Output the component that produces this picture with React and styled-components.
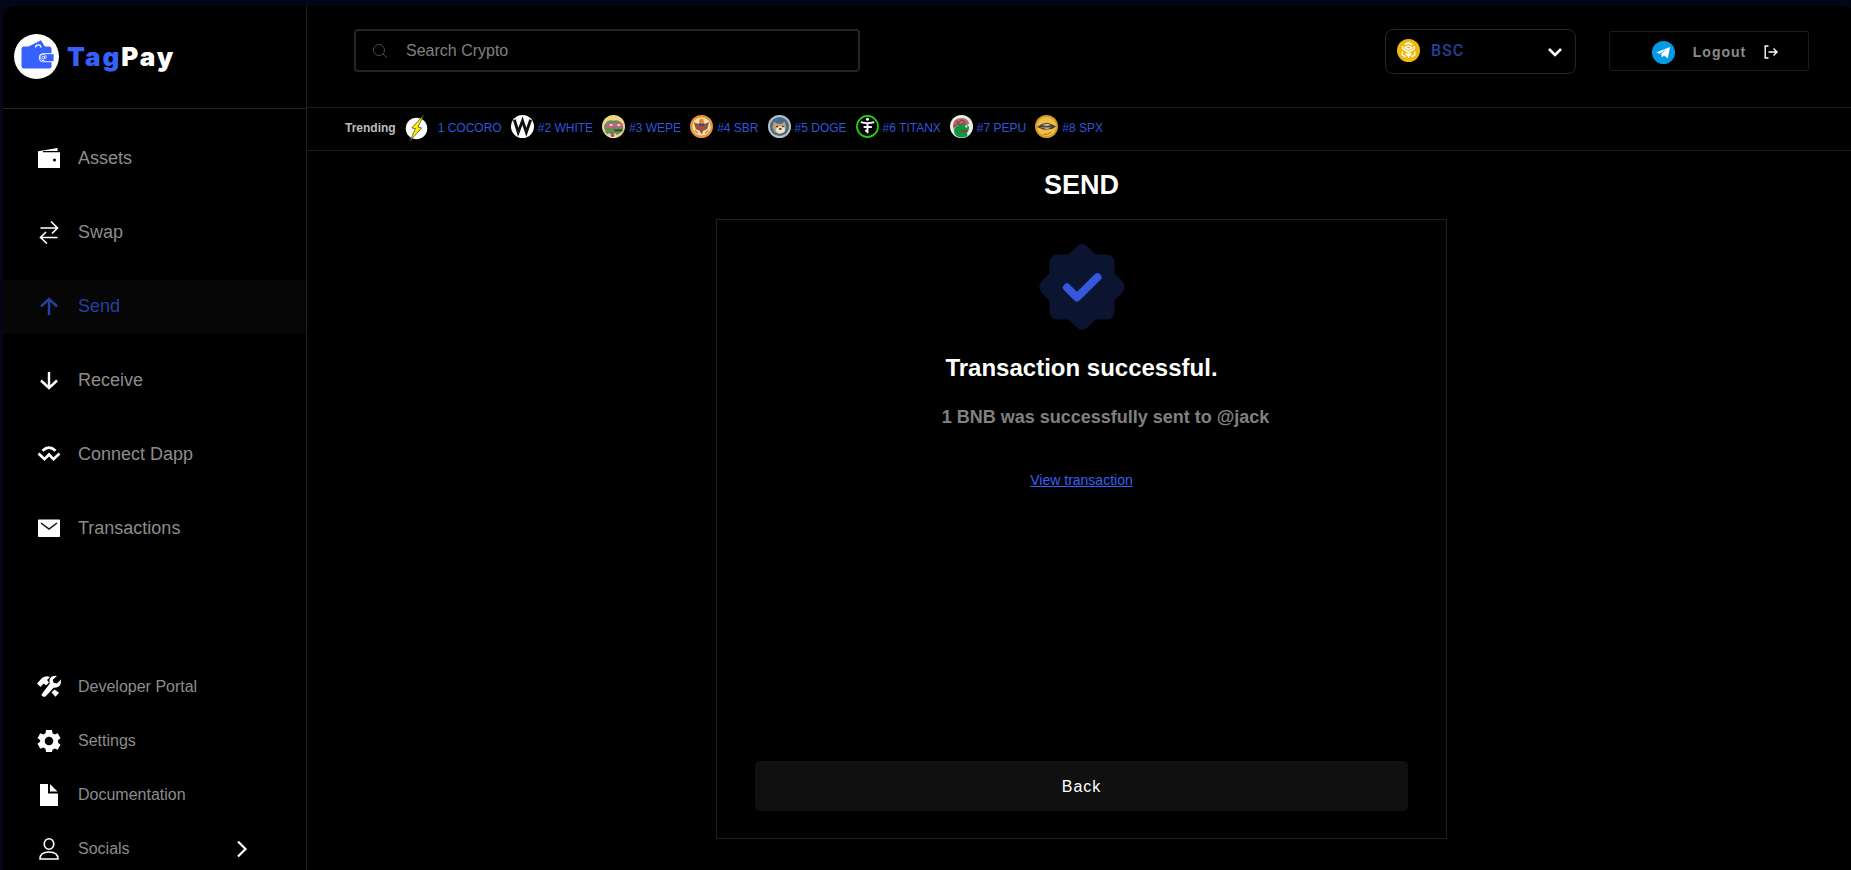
import styled, { createGlobalStyle } from "styled-components";

const GlobalStyle = createGlobalStyle`
  * { box-sizing: border-box; }
  body {
    margin: 0;
    min-height: 100vh;
    background: #030616;
    color: #fff;
    font-family: "Liberation Sans", Arial, sans-serif;
    overflow-x: hidden;
  }
  button, input, select { font: inherit; }
`;

const Frame = styled.div`
  display: grid;
  grid-template-columns: 304px 1fr;
  min-height: calc(100vh - 6px);
  margin: 6px -5px 0 3px;
  background: #000;
  border-radius: 12px;
`;

const Sidebar = styled.aside`
  display: flex;
  flex-direction: column;
  border-right: 1px solid #1f1f1f;
`;

const Brand = styled.a`
  display: flex;
  align-items: center;
  gap: 8px;
  height: 103px;
  padding: 0 0 2px 11px;
  border-bottom: 1px solid #242424;
  color: #fff;
  text-decoration: none;
`;

const BrandName = styled.span`
  font-family: Inter, sans-serif;
  font-size: 26px;
  font-weight: 900;
  letter-spacing: 2px;

  b {
    color: #3761ff;
    font-weight: 900;
  }
`;

const NavList = styled.nav`
  display: flex;
  flex-direction: column;
  gap: ${({ $gap }) => $gap}px;
  padding-top: ${({ $top }) => $top}px;
  font-size: ${({ $size }) => $size}px;
`;

const NavItem = styled.a`
  display: flex;
  align-items: center;
  gap: 17px;
  height: 54px;
  padding: 0 56px 2px 34px;
  background: ${({ $active }) => ($active ? "#060606" : "transparent")};
  color: ${({ $active }) => ($active ? "#2440a0" : "#8c8c8c")};
  text-decoration: none;

  svg {
    color: ${({ $active }) => ($active ? "#2440a0" : "#fff")};
  }

  span {
    flex: 1;
  }
`;

const Main = styled.main`
  display: flex;
  flex-direction: column;
  min-width: 0;
`;

const Header = styled.header`
  display: flex;
  align-items: flex-start;
  height: 102px;
  padding: 23px 47px 0;
  border-bottom: 1px solid #1c1c1c;
`;

const SearchBox = styled.label`
  display: flex;
  align-items: center;
  gap: 18px;
  width: 506px;
  height: 43px;
  margin-right: auto;
  padding: 0 16px;
  border: 2px solid #242424;
  border-radius: 4px;
  color: #4a4a4a;
`;

const SearchInput = styled.input`
  flex: 1;
  min-width: 0;
  padding: 0;
  border: 0;
  outline: 0;
  background: transparent;
  color: #fff;
  font-size: 16px;

  &::placeholder {
    color: #808080;
    opacity: 1;
  }
`;

const NetworkBox = styled.label`
  display: flex;
  align-items: center;
  gap: 11px;
  width: 191px;
  height: 45px;
  margin-right: 33px;
  padding: 0 12px 2px 11px;
  border: 1px solid #262626;
  border-radius: 8px;
`;

const NetworkSelect = styled.select`
  flex: 1;
  min-width: 0;
  padding: 0;
  border: 0;
  outline: 0;
  appearance: none;
  background: transparent;
  color: #273f98;
  font-family: Roboto, sans-serif;
  font-size: 16px;
  font-weight: 500;
  letter-spacing: 1px;
`;

const LogoutButton = styled.button`
  display: flex;
  align-items: center;
  justify-content: center;
  gap: 18px;
  width: 200px;
  height: 40px;
  margin-top: 2px;
  padding: 2px 0 0 12px;
  border: 1px solid #1c1c1c;
  border-radius: 3px;
  background: transparent;
  color: #8a8a8a;
  font-size: 14px;
  font-weight: 700;
  letter-spacing: 1px;
`;

const Trending = styled.section`
  display: flex;
  align-items: center;
  gap: 9px;
  height: 43px;
  padding: 0 38px 6px;
  border-bottom: 1px solid #1c1c1c;
  font-size: 12px;
`;

const TrendingTitle = styled.h2`
  margin: 3px 0 0;
  color: #bdbdbd;
  font-size: 12px;
`;

const Coin = styled.a`
  display: flex;
  align-items: center;
  gap: ${({ $gap }) => $gap || 4}px;
  color: #2f55dc;
  text-decoration: none;

  svg {
    overflow: visible;
  }

  span {
    margin-top: 3px;
  }
`;

const Page = styled.section`
  display: flex;
  flex-direction: column;
  align-items: center;
  padding: 18px 24px 24px;
`;

const PageTitle = styled.h1`
  margin: 0 0 17px;
  font-size: 27px;
  line-height: 33px;
`;

const Card = styled.div`
  display: flex;
  flex-direction: column;
  align-items: center;
  width: 100%;
  max-width: 731px;
  min-height: 620px;
  padding: 24px 38px 27px;
  border: 1px solid #1f1f1f;
`;

const CardTitle = styled.h2`
  margin: 23px 0 0;
  font-size: 24px;
  line-height: 30px;
`;

const Message = styled.p`
  margin: 20px 0 0;
  padding-left: 48px;
  color: #808080;
  font-size: 18px;
  font-weight: 700;
  line-height: 28px;
`;

const TxLink = styled.a`
  margin: 39px 0 24px;
  color: #3761f5;
  font-size: 14px;
  line-height: 20px;
`;

const BackButton = styled.button`
  width: 100%;
  height: 50px;
  margin-top: auto;
  padding: 2px 0 0;
  border: 0;
  border-radius: 5px;
  background: #101010;
  color: #fff;
  font-size: 16px;
  font-weight: 500;
  letter-spacing: 1px;
`;

function Icon({ size = 24, box = 24, children, ...rest }) {
  return (
    <svg width={size} height={size} viewBox={`0 0 ${box} ${box}`} fill="none" aria-hidden="true" {...rest}>
      {children}
    </svg>
  );
}

const stroke = { stroke: "currentColor", fill: "none" };

function BrandLogo() {
  return (
    <Icon size={45} box={45}>
      <circle cx="22.5" cy="22.5" r="22.5" fill="#fff" />
      <path d="M14 14.500 15.500 12 27 6.200 31 13z" fill="#3761ff" />
      <rect x="7.500" y="12.500" width="30" height="22" rx="2.500" fill="#3761ff" />
      <path d="M21.500 13.500a2.700 2.700 0 0 1 5.400 0" stroke="#fff" strokeWidth="1.300" />
      <path d="M40 19.700H28.500q-3.300 0-3.300 4t3.300 4H40z" fill="#3761ff" stroke="#fff" strokeWidth=".9" />
      <circle cx="29.200" cy="23.700" r="1.300" stroke="#fff" strokeWidth=".8" />
      <path d="M30.600 22.300v2q1.600.5 1.600-1.200a3 3 0 1 0-1.600 3.100" stroke="#fff" strokeWidth=".8" />
    </Icon>
  );
}

function WalletIcon() {
  return (
    <Icon>
      <path d="M1 5.200 20.500 2v3H6v1.200h17V22H1z" fill="currentColor" />
      <circle cx="17.500" cy="14" r="1.500" fill="#000" />
    </Icon>
  );
}

function SwapIcon() {
  return (
    <Icon {...stroke} strokeWidth="1.600">
      <path d="M3.500 8H20.500M14 1.500 20.500 8 15 13.500M20.500 17.500H3.500M10 23.500l-6.500-6L9 12" />
    </Icon>
  );
}

function UpIcon() {
  return (
    <Icon {...stroke} strokeWidth="2.400">
      <path d="M12 21V5M4 12.500 12 5l8 7.500" />
    </Icon>
  );
}

function DownIcon() {
  return (
    <Icon {...stroke} strokeWidth="2.400">
      <path d="M12 4v16M4 12.500l8 7.500 8-7.500" />
    </Icon>
  );
}

function DappIcon() {
  return (
    <Icon {...stroke} strokeWidth="2.700">
      <path d="M5.500 8.700q6.500-6 13 0" />
      <path d="m1.500 11.500 6 5.700L12 12.500l4.500 4.700 6-5.700" />
    </Icon>
  );
}

function MailIcon() {
  return (
    <Icon>
      <rect x="1" y="3.500" width="22" height="17.500" rx=".8" fill="currentColor" />
      <path d="m4 7 8 6 8-6" stroke="#111" strokeWidth="1.500" />
    </Icon>
  );
}

function ToolsIcon() {
  return (
    <Icon>
      <path d="M0 8.500 5 3q4-3 8-1l-3 3 2 2.500-3 3-2.200-2L3.500 12z" fill="currentColor" />
      <path d="m14.500 17.500 3-3 4.500 3.300-3.500 4z" fill="currentColor" />
      <path d="M4.500 19.500a2.700 2.700 0 0 0 4 2l8.200-8.800q5 .3 7-3.700l.3-4.500-4.200 4-3.200-.8-.8-3L20 1q-5-1-7.200 3-1 2 0 4.500z" fill="currentColor" />
    </Icon>
  );
}

function GearIcon() {
  return (
    <Icon>
      <path
        fill="currentColor"
        fillRule="evenodd"
        d="M9 1h6l.5 3.300 2.200 1.300 3-1.300 2.800 4.900-2.600 2 .1 2.600 2.500 1.900-2.800 5-3-1.300-2.200 1.300L15 23H9l-.5-3.300-2.200-1.200-3 1.200-2.800-5 2.600-1.900V11L.5 9.200l2.800-4.900 3 1.300 2.200-1.300zM12 7.700a4.300 4.300 0 1 0 0 8.600 4.300 4.300 0 0 0 0-8.600z"
      />
    </Icon>
  );
}

function FileIcon() {
  return (
    <Icon>
      <path d="M3 1h8v9.500h10V23H3z" fill="currentColor" />
      <path d="M13 1v7.500h7.500z" fill="currentColor" />
    </Icon>
  );
}

function UserIcon() {
  return (
    <Icon {...stroke} strokeWidth="1.600">
      <ellipse cx="12" cy="7" rx="4.800" ry="5.200" />
      <path d="M3 22q0-7 9-7t9 7z" />
    </Icon>
  );
}

function BscIcon() {
  return (
    <Icon size={23}>
      <circle cx="12" cy="12" r="12" fill="#f0b90b" />
      <path d="m8 6 4-2.200L16 6M6 7.200v3l6 3.500 6-3.500v-3M5.500 13v3.500L9 18.600M18.500 13v3.500L15 18.600M12 13v6.500M8.500 9l3.500-2 3.500 2-3.500 2z" stroke="#fff" strokeWidth="1.500" />
      <path d="M9 14v2.500l3 2 3-2V14l-3 2z" fill="#fff" />
    </Icon>
  );
}

function TelegramIcon() {
  return (
    <Icon size={23}>
      <circle cx="12" cy="12" r="12" fill="#039be5" />
      <path d="M4.500 12 18.800 6.200 16.500 18l-4-3-2.200 2.200-.8-3.700 6-5-7.500 4.700z" fill="#fff" />
    </Icon>
  );
}

function LogoutIcon() {
  return (
    <Icon size={14} box={14} stroke="#fff" strokeWidth="1.400">
      <path d="M4.500 1H1.200v12h3.300M4.500 7H13M9.500 3.500 13 7l-3.500 3.500" />
    </Icon>
  );
}

function BadgeIcon() {
  return (
    <Icon size={86} box={86}>
      <rect x="10.500" y="10.500" width="65" height="65" rx="8" fill="#0b1431" />
      <rect x="10.500" y="10.500" width="65" height="65" rx="8" fill="#0b1431" transform="rotate(45 43 43)" />
      <path d="m28 43.500 10 10 20.500-20.300" stroke="#3459dd" strokeWidth="8" strokeLinecap="round" strokeLinejoin="round" />
    </Icon>
  );
}

const coinArt = {
  COCORO: (
    <>
      <circle cx="12" cy="14" r="11.200" fill="#fff" />
      <path d="M19.500 0 7 13.500l4 .8L5 27l12.500-13.500-4-.8z" fill="#ffee00" stroke="#333" strokeWidth=".7" />
    </>
  ),
  WHITE: (
    <>
      <circle cx="12" cy="12" r="12" fill="#fff" />
      <path d="m3.500 5 4 13L12 6l4 12 4.500-13" stroke="#111" strokeWidth="3" />
    </>
  ),
  WEPE: (
    <>
      <circle cx="12" cy="12" r="12" fill="#ecd489" />
      <path d="M2 12q3-8 10-6 7-2 10 6v4q-8 9-18 3z" fill="#609057" />
      <path d="M5 8.500h16.500v4.500H14l-1.500-2-2 2.500H5z" fill="#c75aa0" />
      <path d="M8 9.500h3v2H8zM16 9.500h3v2h-3z" fill="#f5dc55" />
      <path d="M13 16h8" stroke="#30452c" strokeWidth="2" />
      <path d="m6 19 4 1 5-1-2 5H9z" fill="#e8e5dd" />
      <circle cx="11" cy="21" r="2" fill="#d44a3a" />
    </>
  ),
  SBR: (
    <>
      <circle cx="12" cy="12" r="12" fill="#e89638" />
      <circle cx="12" cy="12" r="9.500" fill="#f6e0b6" />
      <path d="m4 7.500 4.500 1.500 3.500-2 3.500 2L20 7.500l-2 7-4 2-2 3.500-2-3.500-4-2z" fill="#8a5a3a" />
      <circle cx="12" cy="6.500" r="2.500" fill="#d88632" />
      <path d="M9.500 9.500h5v4q-1 2.500-2.500 2.500t-2.500-2.500z" fill="#c83f38" />
      <path d="M9.500 9.500h5v2h-5z" fill="#344e91" />
      <path d="m5 16 3 3M19 16l-3 3" stroke="#d88632" strokeWidth="1.500" />
    </>
  ),
  DOGE: (
    <>
      <circle cx="12" cy="12" r="12" fill="#bdc5c2" />
      <circle cx="12" cy="12" r="10" fill="#426b93" />
      <path d="m4.500 13 1.500-6 4 2h4l3.500-2 1.500 6-2 5-5 2-5-2z" fill="#c69e68" />
      <ellipse cx="13" cy="15.500" rx="4.800" ry="3.500" fill="#efe2c5" />
      <circle cx="9.500" cy="12" r=".9" fill="#292520" />
      <circle cx="15.500" cy="12" r=".9" fill="#292520" />
      <ellipse cx="12.800" cy="14.500" rx="1.400" ry="1" fill="#292520" />
    </>
  ),
  TITANX: (
    <>
      <circle cx="12" cy="12" r="11" fill="#000" stroke="#20d60b" strokeWidth="1.800" />
      <circle cx="12" cy="4.500" r="1.600" fill="#fff" />
      <path d="M5 7.500q7 2 14 0M8 12.500h8.500M12 8v11M9.500 16.500H12" stroke="#fff" strokeWidth="2" />
    </>
  ),
  PEPU: (
    <>
      <circle cx="12" cy="12" r="12" fill="#e6eee6" />
      <path d="M3 12q0-9 9-9 7 0 8 6l-5 3-7-1-4 4z" fill="#b9696a" />
      <path d="m6 6 3 2 3-3 4 3-4 2-5-1-3 3" stroke="#653638" />
      <path d="M4 16q3-7 9-6 7-1 7 4l-2 4v4q-8 4-13-2z" fill="#129341" />
      <path d="M11 16q5 2 8 0" stroke="#8b3931" strokeWidth="1.700" />
      <circle cx="17" cy="12" r="1.200" fill="#eef4e8" />
    </>
  ),
  SPX: (
    <>
      <circle cx="12" cy="12" r="12" fill="#d69a26" />
      <circle cx="12" cy="12" r="10" fill="#f1bf49" />
      <path d="m2 12.500 5-3L13 8l5 2 4 2-4 2.500-9 1z" fill="#4a4131" />
      <path d="m7 10.500 6-1.500 4 1.500-5 1zM5 13h12l-4 1.500z" fill="#cfc2a6" />
      <path d="M9 20q4 1 8-2" stroke="#a56c18" />
    </>
  ),
};

const mainLinks = [
  { label: "Assets", icon: <WalletIcon /> },
  { label: "Swap", icon: <SwapIcon /> },
  { label: "Send", icon: <UpIcon />, active: true },
  { label: "Receive", icon: <DownIcon /> },
  { label: "Connect Dapp", icon: <DappIcon /> },
  { label: "Transactions", icon: <MailIcon /> },
];

const moreLinks = [
  { label: "Developer Portal", icon: <ToolsIcon /> },
  { label: "Settings", icon: <GearIcon /> },
  { label: "Documentation", icon: <FileIcon /> },
  { label: "Socials", icon: <UserIcon />, expandable: true },
];

const coins = ["COCORO", "WHITE", "WEPE", "SBR", "DOGE", "TITANX", "PEPU", "SPX"];

function NavLinks({ links, ...rest }) {
  return (
    <NavList {...rest}>
      {links.map(({ label, icon, active, expandable }) => (
        <NavItem key={label} href="#" $active={active}>
          {icon}
          <span>{label}</span>
          {expandable && (
            <Icon size={16} box={16} stroke="currentColor" strokeWidth="2.200">
              <path d="m4 .5 7.500 7.500L4 15.500" />
            </Icon>
          )}
        </NavItem>
      ))}
    </NavList>
  );
}

function App() {
  return (
    <>
      <GlobalStyle />
      <Frame>
        <Sidebar>
          <Brand href="#">
            <BrandLogo />
            <BrandName>
              <b>Tag</b>Pay
            </BrandName>
          </Brand>
          <NavLinks links={mainLinks} $gap={20} $top={23} $size={18} />
          <NavLinks links={moreLinks} $gap={0} $top={105} $size={16} />
        </Sidebar>

        <Main>
          <Header>
            <SearchBox>
              <Icon size={16} box={16} stroke="currentColor" strokeWidth="1">
                <circle cx="7" cy="7" r="5.500" />
                <path d="m11 11 4 4" />
              </Icon>
              <SearchInput type="search" placeholder="Search Crypto" aria-label="Search Crypto" />
            </SearchBox>
            <NetworkBox>
              <BscIcon />
              <NetworkSelect aria-label="Network" defaultValue="BSC">
                <option>BSC</option>
              </NetworkSelect>
              <Icon size={16} box={16} stroke="#fff" strokeWidth="2.600">
                <path d="m2 6 6 6 6-6" />
              </Icon>
            </NetworkBox>
            <LogoutButton type="button">
              <TelegramIcon />
              Logout
              <LogoutIcon />
            </LogoutButton>
          </Header>

          <Trending>
            <TrendingTitle>Trending</TrendingTitle>
            {coins.map((coin, i) => (
              <Coin key={coin} href="#" $gap={i === 0 ? 10 : 4}>
                <Icon size={23}>{coinArt[coin]}</Icon>
                <span>
                  {i === 0 ? "1" : `#${i + 1}`} {coin}
                </span>
              </Coin>
            ))}
          </Trending>

          <Page>
            <PageTitle>SEND</PageTitle>
            <Card>
              <BadgeIcon />
              <CardTitle>Transaction successful.</CardTitle>
              <Message>1 BNB was successfully sent to @jack</Message>
              <TxLink href="#">View transaction</TxLink>
              <BackButton type="button">Back</BackButton>
            </Card>
          </Page>
        </Main>
      </Frame>
    </>
  );
}

export default App;
